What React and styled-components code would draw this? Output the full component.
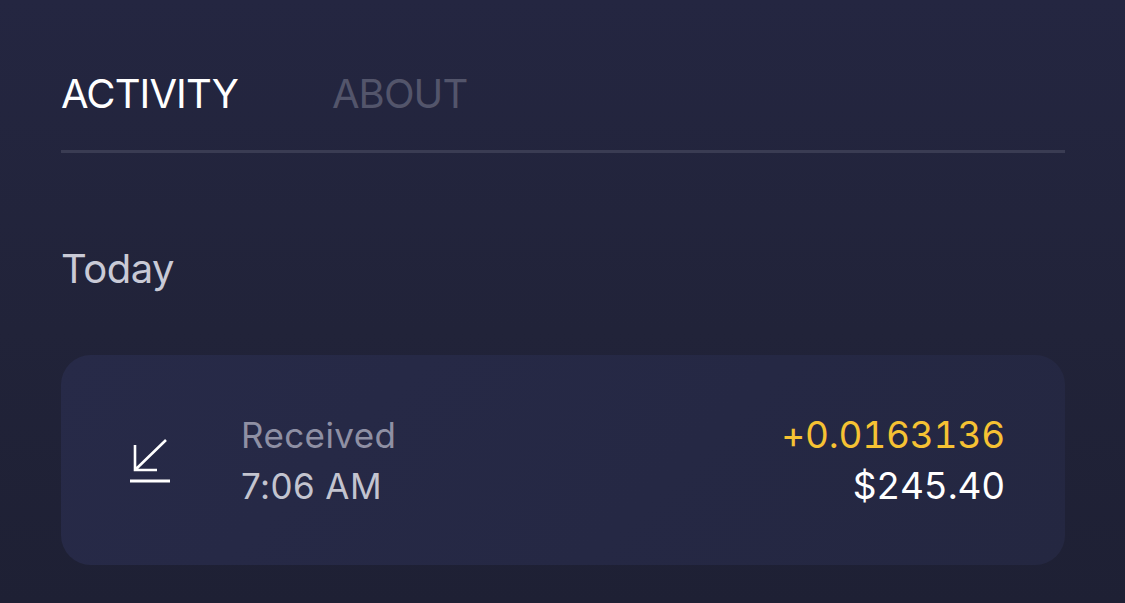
import React from "react";
import styled, { createGlobalStyle } from "styled-components";

const Global = createGlobalStyle`
  html, body { margin: 0; padding: 0; }
  body {
    width: 1125px;
    height: 603px;
    overflow: hidden;
    background: linear-gradient(180deg, #242641 0%, #212339 55%, #1e2034 100%);
    font-family: Inter, "Noto Sans", "Liberation Sans", sans-serif;
    -webkit-font-smoothing: antialiased;
  }
`;

const Page = styled.div`
  padding: 0 60px 0 61px;
  display: flex;
  flex-direction: column;
`;

const TabBar = styled.div`
  display: flex;
  gap: 94px;
  padding-top: 70px;
  padding-bottom: 32px;
  border-bottom: 3px solid #3a3c53;
`;

const Tab = styled.div`
  font-size: 40px;
  line-height: 48px;
  letter-spacing: -0.9px;
  color: ${(p) => (p.$active ? "#ffffff" : "#53556b")};
`;

const SectionTitle = styled.div`
  margin-top: 92px;
  font-size: 40px;
  line-height: 48px;
  letter-spacing: -0.5px;
  color: #c9cad6;
`;

const Card = styled.div`
  margin-top: 62px;
  height: 210px;
  border-radius: 30px;
  background: linear-gradient(135deg, #272a48 0%, #252844 60%, #242741 100%);
  display: flex;
  align-items: center;
  padding: 0 60px 0 69px;
`;

const IconBox = styled.div`
  width: 40px;
  height: 46px;
  flex: none;
  display: flex;
  align-items: center;
  justify-content: center;
`;

const Info = styled.div`
  margin-left: 71px;
  display: flex;
  flex-direction: column;
  gap: 3px;
  flex: 1;
`;

const Label = styled.div`
  font-size: 35px;
  line-height: 48px;
  letter-spacing: 0.4px;
  color: ${(p) => p.$color};
`;

const Amounts = styled.div`
  display: flex;
  flex-direction: column;
  align-items: flex-end;
  gap: 3px;
`;

const Amount = styled.div`
  font-size: 37px;
  line-height: 48px;
  font-variant-numeric: tabular-nums;
  letter-spacing: -0.2px;
  color: ${(p) => p.$color};
`;

function ReceiveIcon() {
  return (
    <svg width="40" height="46" viewBox="0 0 40 46" fill="none">
      <path
        d="M36 3 L5 33 M5 8 L5 33 L27 33"
        stroke="#ffffff"
        strokeWidth="2.6"
        strokeLinecap="butt"
        strokeLinejoin="miter"
      />
      <path d="M0 44 L40 44" stroke="#ffffff" strokeWidth="3" />
    </svg>
  );
}

export default function App() {
  return (
    <>
      <Global />
      <Page>
        <TabBar>
          <Tab $active>ACTIVITY</Tab>
          <Tab>ABOUT</Tab>
        </TabBar>
        <SectionTitle>Today</SectionTitle>
        <Card>
          <IconBox>
            <ReceiveIcon />
          </IconBox>
          <Info>
            <Label $color="#8f90a4">Received</Label>
            <Label $color="#c3c4cf">7:06 AM</Label>
          </Info>
          <Amounts>
            <Amount $color="#f6c233">+0.0163136</Amount>
            <Amount $color="#ffffff">$245.40</Amount>
          </Amounts>
        </Card>
      </Page>
    </>
  );
}
